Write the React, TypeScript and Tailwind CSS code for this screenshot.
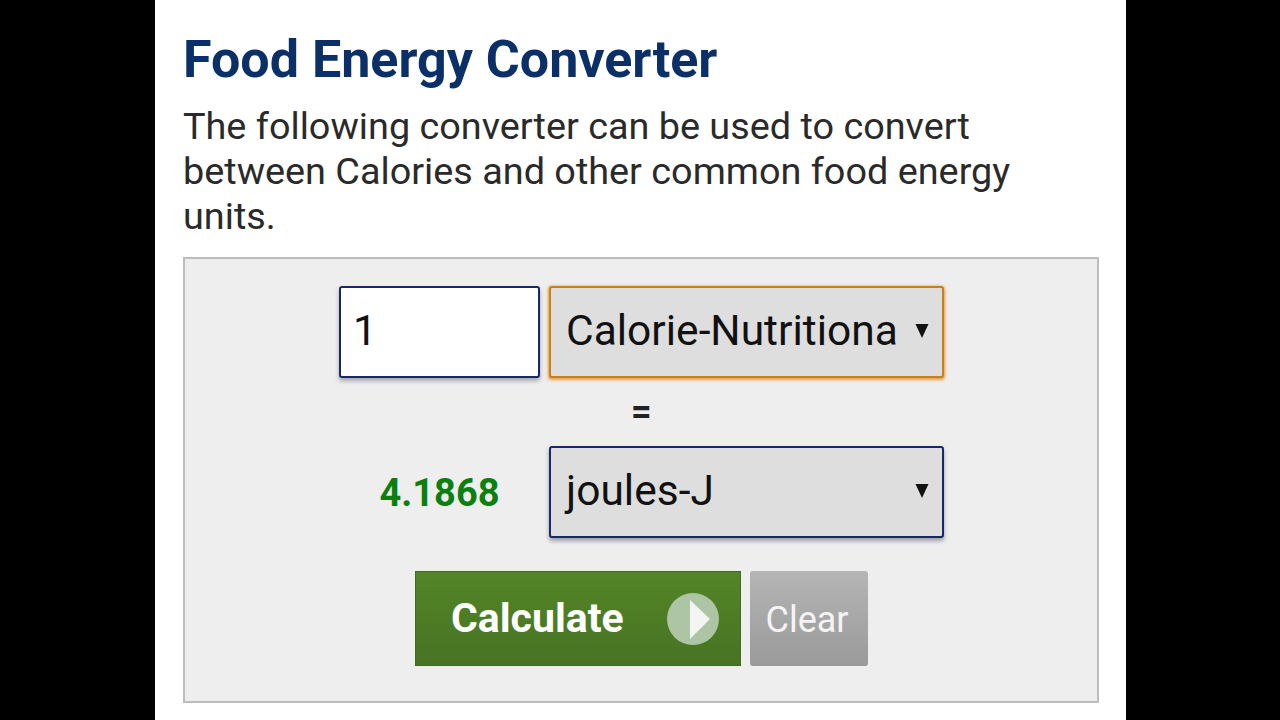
const ArrowDown = () => (
  <svg width="14" height="16" viewBox="0 0 14 16" className="shrink-0">
    <path d="M0.5 1 H13.5 L7 15 Z" fill="#111" />
  </svg>
);

const UnitSelect = ({ label, focused }: { label: string; focused?: boolean }) => (
  <div
    className={`flex h-[92px] w-[395px] items-center justify-between rounded-[3px] border-2 bg-[#dedede] pb-[3px] pl-[15px] pr-[13px] ${
      focused
        ? "border-[#c9801c] shadow-[0_1px_3px_1px_rgba(225,145,40,0.85)]"
        : "border-[#15296b] shadow-[0_3px_4px_rgba(0,0,0,0.35)]"
    }`}
  >
    <span className="whitespace-nowrap pt-[2px] text-[42.5px] leading-none text-[#111]">{label}</span>
    <ArrowDown />
  </div>
);

export default function App() {
  return (
    <div className="flex h-[720px] w-[1280px] overflow-hidden bg-black font-['Roboto',sans-serif]">
      <div className="w-[155px] shrink-0" />
      <main className="w-[971px] bg-white pl-[28px] pr-[27px] pt-[30px]">
        <h1 className="text-[52px] font-bold leading-[60px] text-[#0b3068]">Food Energy Converter</h1>
        <p className="mt-[14px] text-[37.8px] leading-[45px] text-[#2a2a2a]">
          The following converter can be used to convert
          <br />
          between Calories and other common food energy
          <br />
          units.
        </p>
        <div className="mt-[18px] flex h-[446px] w-[916px] flex-col border-2 border-[#bdbdbd] bg-[#eeeeee] pl-[154px] pt-[27px]">
          <div className="flex items-start gap-[9px]">
            <div className="flex h-[92px] w-[201px] items-center rounded-[3px] border-2 border-[#15296b] bg-white pb-[1px] pl-[12px] text-[42.5px] leading-none text-[#111] shadow-[0_3px_4px_rgba(0,0,0,0.3)]">
              1
            </div>
            <UnitSelect label="Calorie-Nutritiona" focused />
          </div>
          <div className="flex h-[68px] items-center pl-[292px] text-[36px] font-bold leading-none text-[#222]">=</div>
          <div className="flex items-center gap-[9px]">
            <div className="w-[201px] pt-[2px] text-center text-[38px] font-bold leading-none text-[#0b800f]">4.1868</div>
            <UnitSelect label="joules-J" />
          </div>
          <div className="mt-[33px] flex gap-[9px] pl-[76px]">
            <button className="flex h-[95px] w-[326px] items-center justify-between border border-[#3f6b22] bg-gradient-to-b from-[#548527] to-[#477323] pl-[35px] pr-[20px]">
              <span className="text-[41px] font-bold leading-none text-white">Calculate</span>
              <svg width="54" height="54" viewBox="0 0 54 54">
                <circle cx="27" cy="27" r="26" fill="#adc5a5" />
                <path d="M24 8 L44 27 L24 47 Z" fill="#f2f5f1" />
              </svg>
            </button>
            <button className="h-[95px] w-[118px] rounded-[3px] bg-gradient-to-b from-[#b5b5b5] to-[#9a9a9a] pr-[4px] pt-[2px] text-center text-[36px] leading-none text-[#f4f4f4]">
              Clear
            </button>
          </div>
        </div>
      </main>
    </div>
  );
}
